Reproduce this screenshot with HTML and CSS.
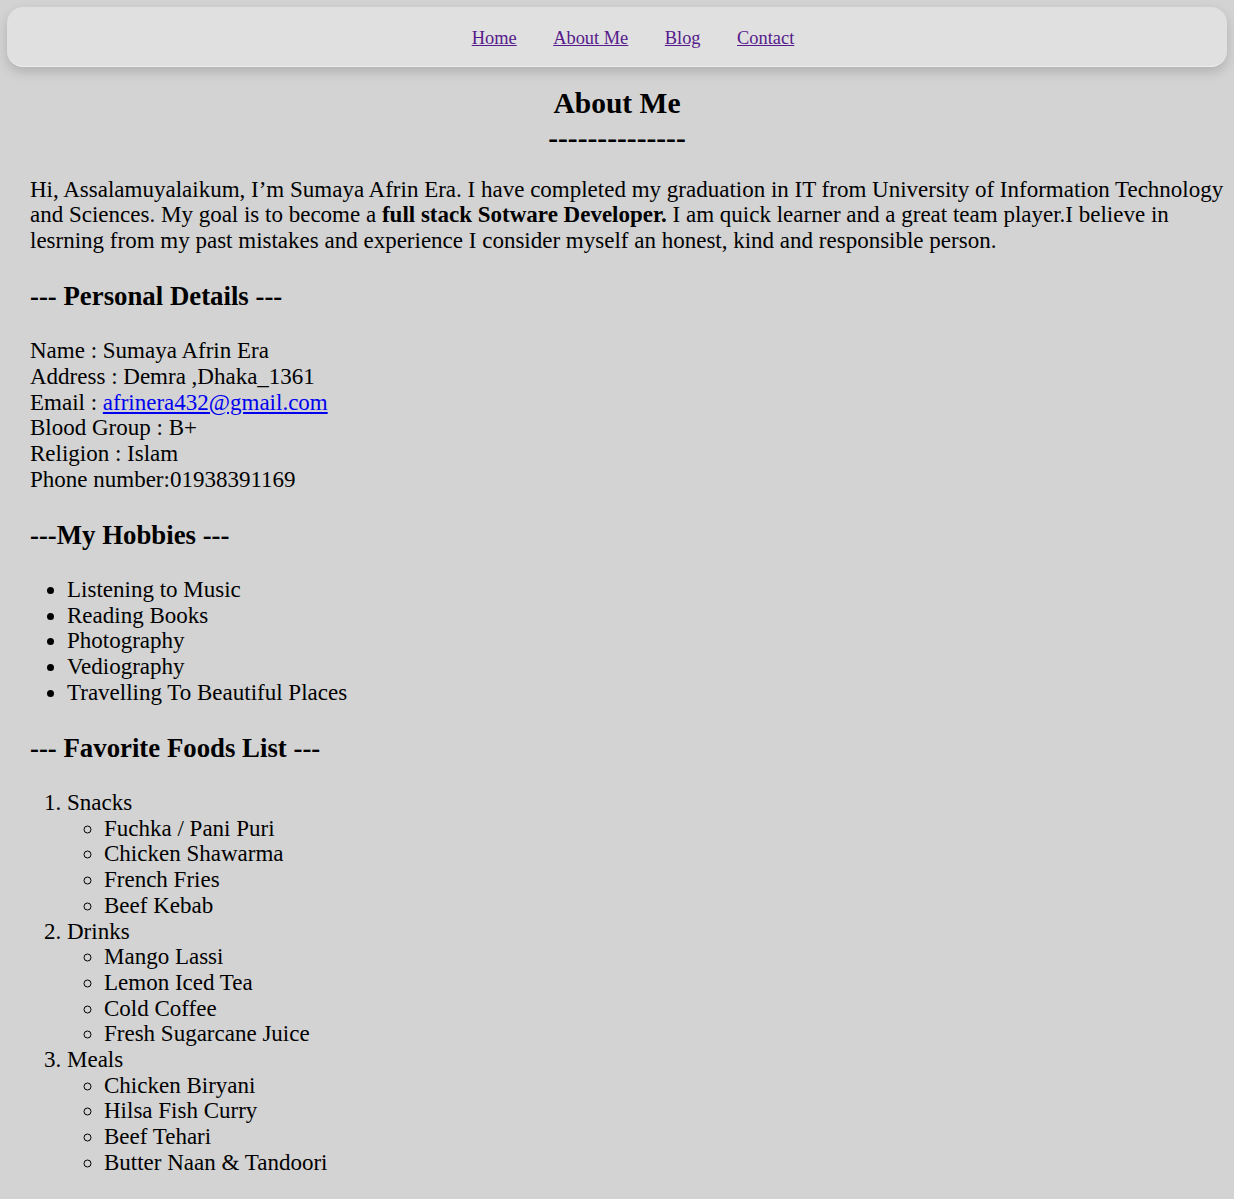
FILE: index.html
```html
<!DOCTYPE html>
<html lang="en">
<head>
<meta charset="utf-8">
<title>About Me</title>
<link rel="stylesheet" href="styles.css">
</head>
<body>
<nav class="nav">
  <ul class="nav-list">
    <li><a class="nav-link" href="#">Home</a></li>
    <li><a class="nav-link" href="#">About Me</a></li>
    <li><a class="nav-link" href="#">Blog</a></li>
    <li><a class="nav-link" href="#">Contact</a></li>
  </ul>
</nav>
<main class="main">
  <h1 class="title">About Me<br>--------------</h1>
  <section class="content">
    <p class="intro">Hi, Assalamuyalaikum, I’m Sumaya Afrin Era. I have completed my graduation in IT from University of Information Technology and Sciences. My goal is to become a <b>full stack Sotware Developer.</b> I am quick learner and a great team player.I believe in lesrning from my past mistakes and experience I consider myself an honest, kind and responsible person.</p>

    <h3 class="sub">--- Personal Details ---</h3>
    <p class="details">Name : Sumaya Afrin Era<br>
    Address : Demra ,Dhaka_1361<br>
    Email : <a class="mail" href="#">afrinera432@gmail.com</a><br>
    Blood Group : B+<br>
    Religion : Islam<br>
    Phone number:01938391169</p>

    <h3 class="sub">---My Hobbies ---</h3>
    <ul class="list">
      <li>Listening to Music</li>
      <li>Reading Books</li>
      <li>Photography</li>
      <li>Vediography</li>
      <li>Travelling To Beautiful Places</li>
    </ul>

    <h3 class="sub">--- Favorite Foods List ---</h3>
    <ol class="list">
      <li>Snacks
        <ul class="sublist">
          <li>Fuchka / Pani Puri</li>
          <li>Chicken Shawarma</li>
          <li>French Fries</li>
          <li>Beef Kebab</li>
        </ul>
      </li>
      <li>Drinks
        <ul class="sublist">
          <li>Mango Lassi</li>
          <li>Lemon Iced Tea</li>
          <li>Cold Coffee</li>
          <li>Fresh Sugarcane Juice</li>
        </ul>
      </li>
      <li>Meals
        <ul class="sublist">
          <li>Chicken Biryani</li>
          <li>Hilsa Fish Curry</li>
          <li>Beef Tehari</li>
          <li>Butter Naan &amp; Tandoori</li>
        </ul>
      </li>
    </ol>
  </section>
</main>
</body>
</html>
```
FILE: styles.css
```css
html, body {
  margin: 0;
  padding: 0;
}
body {
  background: #d3d3d3;
  font-family: "Liberation Serif", "Times New Roman", serif;
  font-size: 23px;
  line-height: 25.7px;
  color: #000;
  padding: 7px 7px 20px 7px;
}
.nav {
  height: 60px;
  box-sizing: border-box;
  padding-bottom: 0;
  background: #e0e0e0;
  border-radius: 16px;
  border-bottom: 1px solid #ededed;
  box-shadow: 0 5px 12px rgba(0, 0, 0, 0.16);
  display: flex;
  align-items: center;
  justify-content: center;
}
.nav-list {
  list-style: none;
  margin: 0;
  padding: 0 0 0 32px;
  display: flex;
  gap: 36.5px;
}
.nav-link {
  font-size: 18.4px;
  line-height: 21px;
  color: #551a8b;
  text-decoration: underline;
}
.main {
  margin: 0;
}
.title {
  text-align: center;
  font-size: 29.5px;
  line-height: 35px;
  font-weight: bold;
  margin: 19px 0 20.7px 0;
}
.content {
  padding-left: 23px;
}
.intro {
  margin: 20.7px 0;
}
.sub {
  font-size: 26.8px;
  line-height: 30.8px;
  font-weight: bold;
  margin: 27.5px 0 26.2px 0;
}
.details {
  margin: 20.7px 0;
}
.mail {
  color: #0000ee;
}
.list {
  margin: 20.7px 0;
  padding-left: 37px;
}
.sublist {
  margin: 0;
  padding-left: 37px;
  list-style-type: circle;
}
```
